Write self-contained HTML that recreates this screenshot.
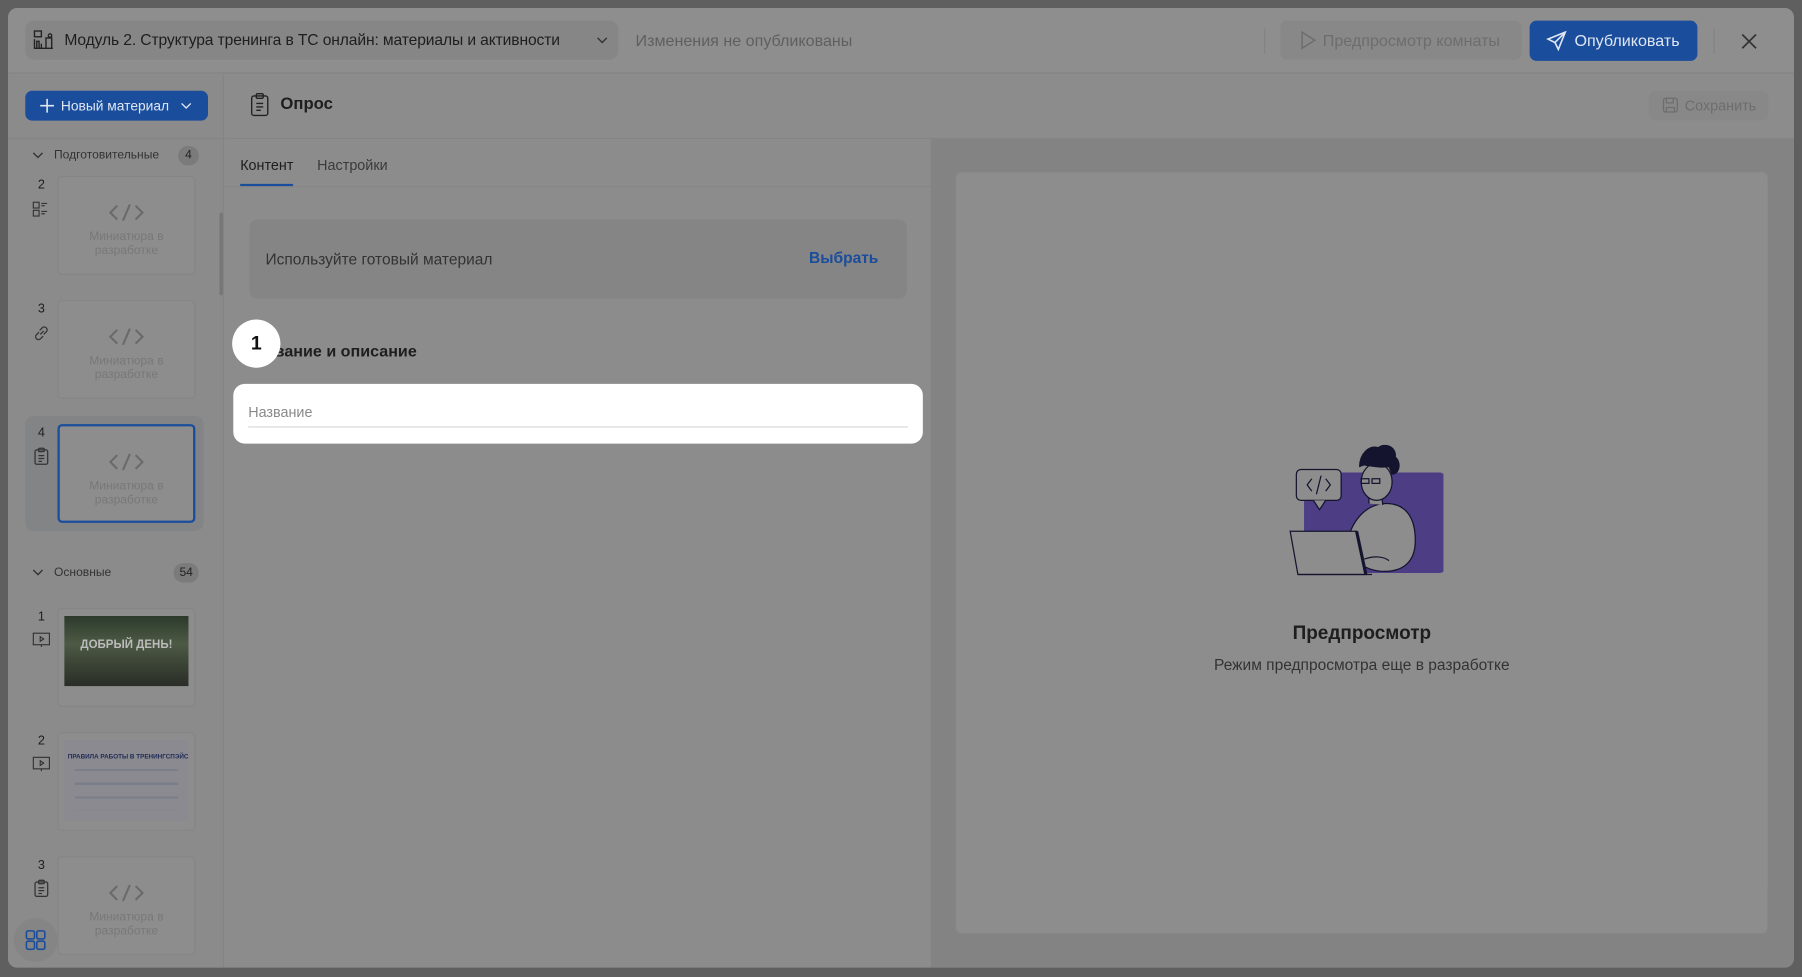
<!DOCTYPE html>
<html><head><meta charset="utf-8"><style>
*{box-sizing:border-box;margin:0;padding:0}
html,body{width:1802px;height:977px;overflow:hidden;background:#5f5f5f;font-family:"Liberation Sans",sans-serif}
#w{position:absolute;left:0;top:0;width:1568px;height:850px;transform:scale(1.14923);transform-origin:0 0}
.pg{position:absolute;left:7px;top:7px;width:1554px;height:835px;background:#8c8c8c;border-radius:8px;overflow:hidden}
.a{position:absolute}
.t{color:#1e1e1e}
.thumb{position:absolute;left:43px;width:120px;height:86px;border:1px solid #858585;border-radius:4px;background:#8d8d8d;text-align:center;color:#787878;font-size:10.5px;line-height:12px}
.thumb svg{display:block;margin:23px auto 7px}
.num{position:absolute;left:22px;font-size:11px;color:#1e1e1e;width:14px;text-align:center}
</style></head><body><div id="w">
<div class="pg">
 <div class="a" style="left:0;top:0;width:1554px;height:57px;background:#8e8e8e;border-bottom:1px solid #848484"></div>
 <div class="a" style="left:15px;top:11px;width:516px;height:34px;background:#868686;border-radius:8px"></div>
 <svg class="a" style="left:21px;top:18px" width="20" height="20" viewBox="0 0 20 20" fill="none" stroke="#222" stroke-width="1.2"><rect x="2" y="2" width="6" height="5"/><path d="M2 9v8h16M4 17v-6h2v6M8 17v-4M12 17V8h5v9M14 6a1.5 1.5 0 1 0 0-.1"/></svg>
 <div class="a t" style="left:49px;top:20px;font-size:13.6px;letter-spacing:-0.1px">Модуль 2. Структура тренинга в ТС онлайн: материалы и активности</div>
 <svg class="a" style="left:512px;top:24px" width="10" height="8" viewBox="0 0 10 8" fill="none" stroke="#333" stroke-width="1.2"><path d="M1 2l4 4 4-4"/></svg>
 <div class="a" style="left:546px;top:20px;font-size:14px;color:#5f5f5f">Изменения не опубликованы</div>
 <div class="a" style="left:1093px;top:18px;width:1px;height:22px;background:#838383"></div>
 <div class="a" style="left:1107px;top:11px;width:210px;height:34px;background:#888;border-radius:6px;color:#6d6d6d;font-size:14px;line-height:34px;padding-left:37px">Предпросмотр комнаты</div>
 <svg class="a" style="left:1122px;top:19px" width="18" height="18" viewBox="0 0 18 18" fill="none" stroke="#6d6d6d" stroke-width="1.3"><path d="M4 2l11 7-11 7z"/></svg>
 <div class="a" style="left:1324px;top:11px;width:146px;height:35px;background:#1a4d9c;border-radius:6px;color:#dfe6f2;font-size:14px;line-height:35px;padding-left:39px">Опубликовать</div>
 <svg class="a" style="left:1338px;top:19px" width="19" height="19" viewBox="0 0 19 19" fill="none" stroke="#dfe6f2" stroke-width="1.4"><path d="M17 2L2 8l6 3 3 6zM8 11l9-9"/></svg>
 <div class="a" style="left:1484px;top:18px;width:1px;height:22px;background:#838383"></div>
 <svg class="a" style="left:1507px;top:21px" width="16" height="16" viewBox="0 0 16 16" stroke="#333" stroke-width="1.5"><path d="M2 2l12 12M14 2L2 14"/></svg>

 <div class="a" style="left:0;top:58px;width:188px;height:777px;background:#8b8b8b;border-right:1px solid #848484"></div>
 <div class="a" style="left:0;top:113px;width:188px;height:1px;background:#848484"></div>
 <div class="a" style="left:15px;top:72px;width:159px;height:26px;background:#1a4d9c;border-radius:6px;color:#dfe6f2;font-size:12px;line-height:26px;padding-left:31px">Новый материал</div>
 <svg class="a" style="left:27px;top:78px" width="14" height="14" viewBox="0 0 14 14" stroke="#dfe6f2" stroke-width="1.4"><path d="M7 1v12M1 7h12"/></svg>
 <svg class="a" style="left:150px;top:82px" width="10" height="7" viewBox="0 0 10 7" fill="none" stroke="#dfe6f2" stroke-width="1.2"><path d="M1 1l4 4 4-4"/></svg>
 <svg class="a" style="left:21px;top:125px" width="10" height="7" viewBox="0 0 10 7" fill="none" stroke="#333" stroke-width="1.2"><path d="M1 1l4 4 4-4"/></svg>
 <div class="a" style="left:40px;top:122px;font-size:10.5px;color:#333">Подготовительные</div>
 <div class="a" style="left:148px;top:120px;width:18px;height:17px;border-radius:9px;background:#7b7b7b;font-size:10.5px;text-align:center;line-height:17px;color:#222">4</div>
 <div class="a" style="left:184px;top:178px;width:3px;height:72px;background:#777;border-radius:2px"></div>
 <div class="num" style="top:148px">2</div>
 <svg class="a" style="left:21px;top:168px" width="16" height="14" viewBox="0 0 16 14" fill="none" stroke="#333" stroke-width="1"><rect x="1" y="1" width="5" height="5"/><rect x="1" y="8" width="5" height="5"/><path d="M8 2h5M8 4h3M8 9h5M8 11h3"/></svg>
 <div class="thumb" style="top:146px"><svg width="32" height="16" viewBox="0 0 32 16" fill="none" stroke="#6a6a6a" stroke-width="1.8"><path d="M8 2L2 8l6 6M24 2l6 6-6 6M19 1l-6 14"/></svg>Миниатюра в<br>разработке</div>
 <div class="num" style="top:256px">3</div>
 <svg class="a" style="left:21px;top:275px" width="16" height="16" viewBox="0 0 16 16" fill="none" stroke="#333" stroke-width="1.1"><path d="M7 9l3-3M6 7L3.5 9.5a2.5 2.5 0 0 0 3.5 3.5L9.5 10.5M10 9l2.5-2.5A2.5 2.5 0 0 0 9 3L6.5 5.5"/></svg>
 <div class="thumb" style="top:254px"><svg width="32" height="16" viewBox="0 0 32 16" fill="none" stroke="#6a6a6a" stroke-width="1.8"><path d="M8 2L2 8l6 6M24 2l6 6-6 6M19 1l-6 14"/></svg>Миниатюра в<br>разработке</div>
 <div class="a" style="left:15px;top:355px;width:155px;height:100px;background:#828486;border-radius:7px"></div>
 <div class="num" style="top:364px">4</div>
 <svg class="a" style="left:22px;top:382px" width="14" height="16" viewBox="0 0 14 16" fill="none" stroke="#333" stroke-width="1.1"><rect x="1.5" y="2.5" width="11" height="12.5" rx="1.5"/><rect x="4.5" y="1" width="5" height="3" rx="1"/><path d="M4.5 7.5h5M4.5 10h5M4.5 12.5h3"/></svg>
 <div class="thumb" style="top:362px;border:2px solid #1a4d9c"><svg width="32" height="16" viewBox="0 0 32 16" fill="none" stroke="#6a6a6a" stroke-width="1.8"><path d="M8 2L2 8l6 6M24 2l6 6-6 6M19 1l-6 14"/></svg>Миниатюра в<br>разработке</div>
 <svg class="a" style="left:21px;top:488px" width="10" height="7" viewBox="0 0 10 7" fill="none" stroke="#333" stroke-width="1.2"><path d="M1 1l4 4 4-4"/></svg>
 <div class="a" style="left:40px;top:485px;font-size:10.5px;color:#333">Основные</div>
 <div class="a" style="left:144px;top:483px;width:22px;height:17px;border-radius:9px;background:#7b7b7b;font-size:10.5px;text-align:center;line-height:17px;color:#222">54</div>
 <div class="num" style="top:524px">1</div>
 <svg class="a" style="left:21px;top:543px" width="16" height="14" viewBox="0 0 16 14" fill="none" stroke="#333" stroke-width="1"><rect x="1" y="1" width="14" height="10"/><path d="M7 4l3 2-3 2zM8 11v2"/></svg>
 <div class="thumb" style="top:522px"></div>
 <div class="a" style="left:49px;top:529px;width:108px;height:61px;background:linear-gradient(180deg,#2c3a2c,#4d5a45 40%,#3a4234 70%,#2a2e28);"></div>
 <div class="a" style="left:49px;top:549px;width:108px;text-align:center;color:#bbb;font-size:10px;font-weight:bold">ДОБРЫЙ ДЕНЬ!</div>
 <div class="num" style="top:632px">2</div>
 <svg class="a" style="left:21px;top:651px" width="16" height="14" viewBox="0 0 16 14" fill="none" stroke="#333" stroke-width="1"><rect x="1" y="1" width="14" height="10"/><path d="M7 4l3 2-3 2zM8 11v2"/></svg>
 <div class="thumb" style="top:630px"></div>
 <div class="a" style="left:49px;top:637px;width:108px;height:70px;background:#8a8a90"></div>
 <div class="a" style="left:52px;top:649px;font-size:5.5px;color:#1f2a55;font-weight:bold">ПРАВИЛА РАБОТЫ В ТРЕНИНГСПЭЙС</div>
 <div class="a" style="left:58px;top:662px;width:90px;height:36px;background:repeating-linear-gradient(180deg,#7a7e8a 0 2px,transparent 2px 12px)"></div>
 <div class="num" style="top:740px">3</div>
 <svg class="a" style="left:22px;top:758px" width="14" height="16" viewBox="0 0 14 16" fill="none" stroke="#333" stroke-width="1.1"><rect x="1.5" y="2.5" width="11" height="12.5" rx="1.5"/><rect x="4.5" y="1" width="5" height="3" rx="1"/><path d="M4.5 7.5h5M4.5 10h5M4.5 12.5h3"/></svg>
 <div class="thumb" style="top:738px"><svg width="32" height="16" viewBox="0 0 32 16" fill="none" stroke="#6a6a6a" stroke-width="1.8"><path d="M8 2L2 8l6 6M24 2l6 6-6 6M19 1l-6 14"/></svg>Миниатюра в<br>разработке</div>
 <div class="a" style="left:5px;top:792px;width:38px;height:38px;border-radius:19px;background:#858585"></div>
 <svg class="a" style="left:15px;top:802px" width="18" height="18" viewBox="0 0 18 18" fill="none" stroke="#1a4d9c" stroke-width="1.4"><rect x="1" y="1" width="7" height="7" rx="1.5"/><rect x="10" y="1" width="7" height="7" rx="1.5"/><rect x="1" y="10" width="7" height="7" rx="1.5"/><rect x="10" y="10" width="7" height="7" rx="1.5"/></svg>

 <div class="a" style="left:189px;top:113px;width:1365px;height:1px;background:#848484"></div>
 <svg class="a" style="left:210px;top:73px" width="18" height="22" viewBox="0 0 18 22" fill="none" stroke="#222" stroke-width="1.2"><rect x="2" y="3.5" width="14" height="17" rx="2"/><rect x="6" y="1.5" width="6" height="4" rx="1"/><path d="M6 10h6M6 13h6M6 16h4"/></svg>
 <div class="a t" style="left:237px;top:76px;font-size:14.5px;font-weight:bold">Опрос</div>
 <div class="a" style="left:1428px;top:72px;width:104px;height:26px;background:#888;border-radius:6px;color:#6d6d6d;font-size:12.5px;line-height:26px;padding-left:31px">Сохранить</div>
 <svg class="a" style="left:1439px;top:77px" width="15" height="15" viewBox="0 0 15 15" fill="none" stroke="#6d6d6d" stroke-width="1.1"><rect x="1.5" y="1.5" width="12" height="12" rx="2"/><path d="M4 1.5v4h6v-4M4 13.5v-4h7v4"/></svg>

 <div class="a t" style="left:202px;top:130px;font-size:12.5px">Контент</div>
 <div class="a" style="left:269px;top:130px;font-size:12.5px;color:#3a3a3a">Настройки</div>
 <div class="a" style="left:202px;top:153px;width:46px;height:2px;background:#1a4d9c"></div>
 <div class="a" style="left:189px;top:155px;width:614px;height:1px;background:#848484"></div>
 <div class="a" style="left:210px;top:184px;width:572px;height:69px;background:#858585;border-radius:7px"></div>
 <div class="a" style="left:224px;top:211px;font-size:13.5px;color:#333">Используйте готовый материал</div>
 <div class="a" style="left:697px;top:210px;font-size:13.5px;color:#1a4d9c;font-weight:bold">Выбрать</div>
 <div class="a t" style="left:232px;top:290px;font-size:14px;font-weight:bold">вание и описание</div>
 <div class="a" style="left:196px;top:327px;width:600px;height:52px;background:#fff;border-radius:10px"></div>
 <div class="a" style="left:209px;top:345px;font-size:12.5px;color:#8a8a8a">Название</div>
 <div class="a" style="left:209px;top:364px;width:574px;height:1px;background:#d6d6d6"></div>
 <div class="a" style="left:195px;top:271px;width:42px;height:42px;border-radius:21px;background:#fff;text-align:center;line-height:42px;font-size:17px;font-weight:bold;color:#111">1</div>

 <div class="a" style="left:803px;top:114px;width:751px;height:721px;background:#838383"></div>
 <div class="a" style="left:824px;top:142px;width:708px;height:664px;background:#8d8d8d;border:1px solid #858585;border-radius:6px"></div>
 <svg class="a" style="left:1114px;top:380px" width="135" height="125" viewBox="0 0 100 93" fill="none" stroke="#14142e" stroke-width="0.8">
  <rect x="10" y="18" width="91" height="65" rx="3" fill="#4c3d85" stroke="none"/>
  <rect x="5" y="16" width="29" height="20" rx="3" fill="#8d8d8d"/>
  <path d="M16 36l4 6 4-6" fill="#8d8d8d"/>
  <path d="M15 22l-3 4 3 4M24 22l3 4-3 4M21 20l-3 12"/>
  <path d="M40 56c5-12 14-18 23-18 12 0 19 8 19 24 0 14-8 20-20 20-8 0-12-3-15-4" fill="#8d8d8d"/>
  <path d="M52 38l0-6h8l1 7" fill="#8d8d8d"/>
  <ellipse cx="57" cy="24" rx="10" ry="12" fill="#8d8d8d"/>
  <path d="M46 14c0-8 6-14 12-12 5-4 12 0 11 6 4 3 3 11-2 11l-2-5c-4 1-10 0-16-1z" fill="#14142e"/>
  <rect x="47" y="22" width="5" height="3"/><rect x="54" y="22" width="5" height="3"/>
  <path d="M1 56h43l6 28H6z" fill="#8d8d8d"/>
  <path d="M44 56l6 28" stroke-width="2"/>
  <path d="M6 84h48"/>
  <path d="M49 74c6-2 12-2 16 1"/>
 </svg>
 <div class="a t" style="left:824px;top:535px;width:708px;text-align:center;font-size:16.5px;font-weight:bold">Предпросмотр</div>
 <div class="a" style="left:824px;top:564px;width:708px;text-align:center;font-size:13.5px;color:#333">Режим предпросмотра еще в разработке</div>
</div>
</div></body></html>
